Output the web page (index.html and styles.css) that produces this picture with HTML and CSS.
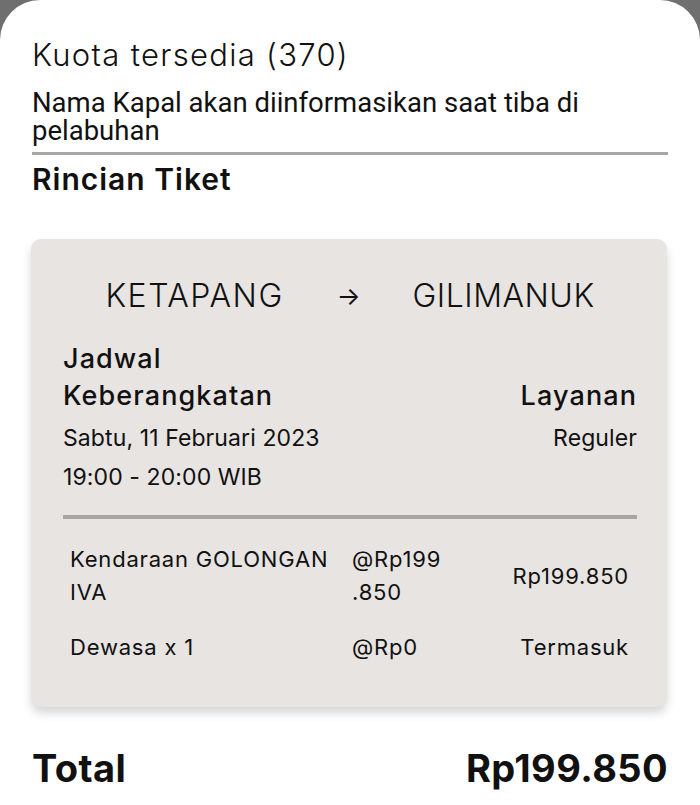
FILE: index.html
```html
<!DOCTYPE html>
<html lang="id">
<head>
  <meta charset="UTF-8">
  <title>Rincian Tiket</title>
  <link rel="stylesheet" href="styles.css">
</head>
<body>

<div class="sheet">
  <div class="quota">Kuota tersedia (370)</div>
  <div class="ship-note">Nama Kapal akan diinformasikan saat tiba di pelabuhan</div>
  <div class="divider"></div>
  <h2 class="section-title">Rincian Tiket</h2>

  <div class="ticket">
    <div class="route">
      <span class="port port-from">KETAPANG</span>
      <span class="arrow">&#8594;</span>
      <span class="port port-to">GILIMANUK</span>
    </div>

    <div class="schedule">
      <div class="schedule-left">
        <div class="label">Jadwal<br>Keberangkatan</div>
        <div class="value">Sabtu, 11 Februari 2023</div>
        <div class="value">19:00 - 20:00 WIB</div>
      </div>
      <div class="schedule-right">
        <div class="label">Layanan</div>
        <div class="value">Reguler</div>
      </div>
    </div>

    <div class="ticket-divider"></div>

    <div class="items">
      <div class="item">
        <div class="item-name">Kendaraan GOLONGAN IVA</div>
        <div class="item-price">@Rp199<wbr>.850</div>
        <div class="item-total">Rp199.850</div>
      </div>
      <div class="item">
        <div class="item-name">Dewasa x 1</div>
        <div class="item-price">@Rp0</div>
        <div class="item-total">Termasuk</div>
      </div>
    </div>
  </div>

  <div class="total">
    <span>Total</span>
    <span>Rp199.850</span>
  </div>
</div>

</body>
</html>
```

FILE: styles.css
```css
body {
  margin: 0;
  background: #6f6f6f;
  font-family: 'Inter', 'Noto Sans', sans-serif;
  color: #111;
  overflow: hidden;
}

.sheet {
  background: #ffffff;
  border-radius: 40px 40px 0 0;
  min-height: 805px;
  padding: 33px 32px 0 32px;
  box-sizing: border-box;
}

.quota {
  font-size: 31px;
  font-weight: 300;
  letter-spacing: 1.3px;
  line-height: 44px;
}

.ship-note {
  font-family: 'Roboto', sans-serif;
  font-size: 27.5px;
  line-height: 28px;
  margin-top: 12px;
}

.divider {
  height: 3px;
  background: #aaa6a3;
  margin-top: 7px;
}

.section-title {
  font-size: 30px;
  font-weight: 600;
  letter-spacing: 1px;
  line-height: 40px;
  margin: 4px 0 0 0;
}

.ticket {
  background: #e7e4e2;
  border-radius: 10px;
  margin: 40px 1px 0 -1px;
  padding: 35px 30px 43px 32px;
  box-shadow: 0 6px 10px rgba(0, 0, 0, 0.16);
}

.route {
  display: flex;
  justify-content: center;
  align-items: center;
  font-size: 32px;
  font-weight: 300;
  line-height: 44px;
}

.port-from {
  letter-spacing: 1.5px;
}

.port-to {
  letter-spacing: 0.5px;
}

.arrow {
  font-size: 25px;
  font-weight: 400;
  margin: 0 52px 0 53px;
}

.schedule {
  display: flex;
  justify-content: space-between;
  align-items: flex-start;
  margin-top: 22px;
}

.schedule-right {
  text-align: right;
  padding-top: 37px;
}

.label {
  font-size: 27px;
  font-weight: 500;
  letter-spacing: 1.1px;
  line-height: 37px;
  margin-bottom: 5px;
}

.value {
  font-size: 23px;
  font-weight: 400;
  letter-spacing: 0.1px;
  line-height: 39px;
}

.ticket-divider {
  height: 4px;
  background: #a9a5a2;
  margin-top: 18px;
}

.items {
  display: flex;
  flex-direction: column;
  gap: 22px;
  padding: 24px 8px 0 7px;
}

.item {
  display: grid;
  grid-template-columns: 282px 100px 1fr;
  align-items: center;
  font-size: 22px;
  font-weight: 400;
  letter-spacing: 0.8px;
  line-height: 33px;
}

.item-name {
  padding-right: 8px;
}

.item-total {
  text-align: right;
}

.total {
  display: flex;
  justify-content: space-between;
  font-size: 38px;
  font-weight: 700;
  letter-spacing: 0.4px;
  line-height: 46px;
  margin-top: 38px;
}
```
